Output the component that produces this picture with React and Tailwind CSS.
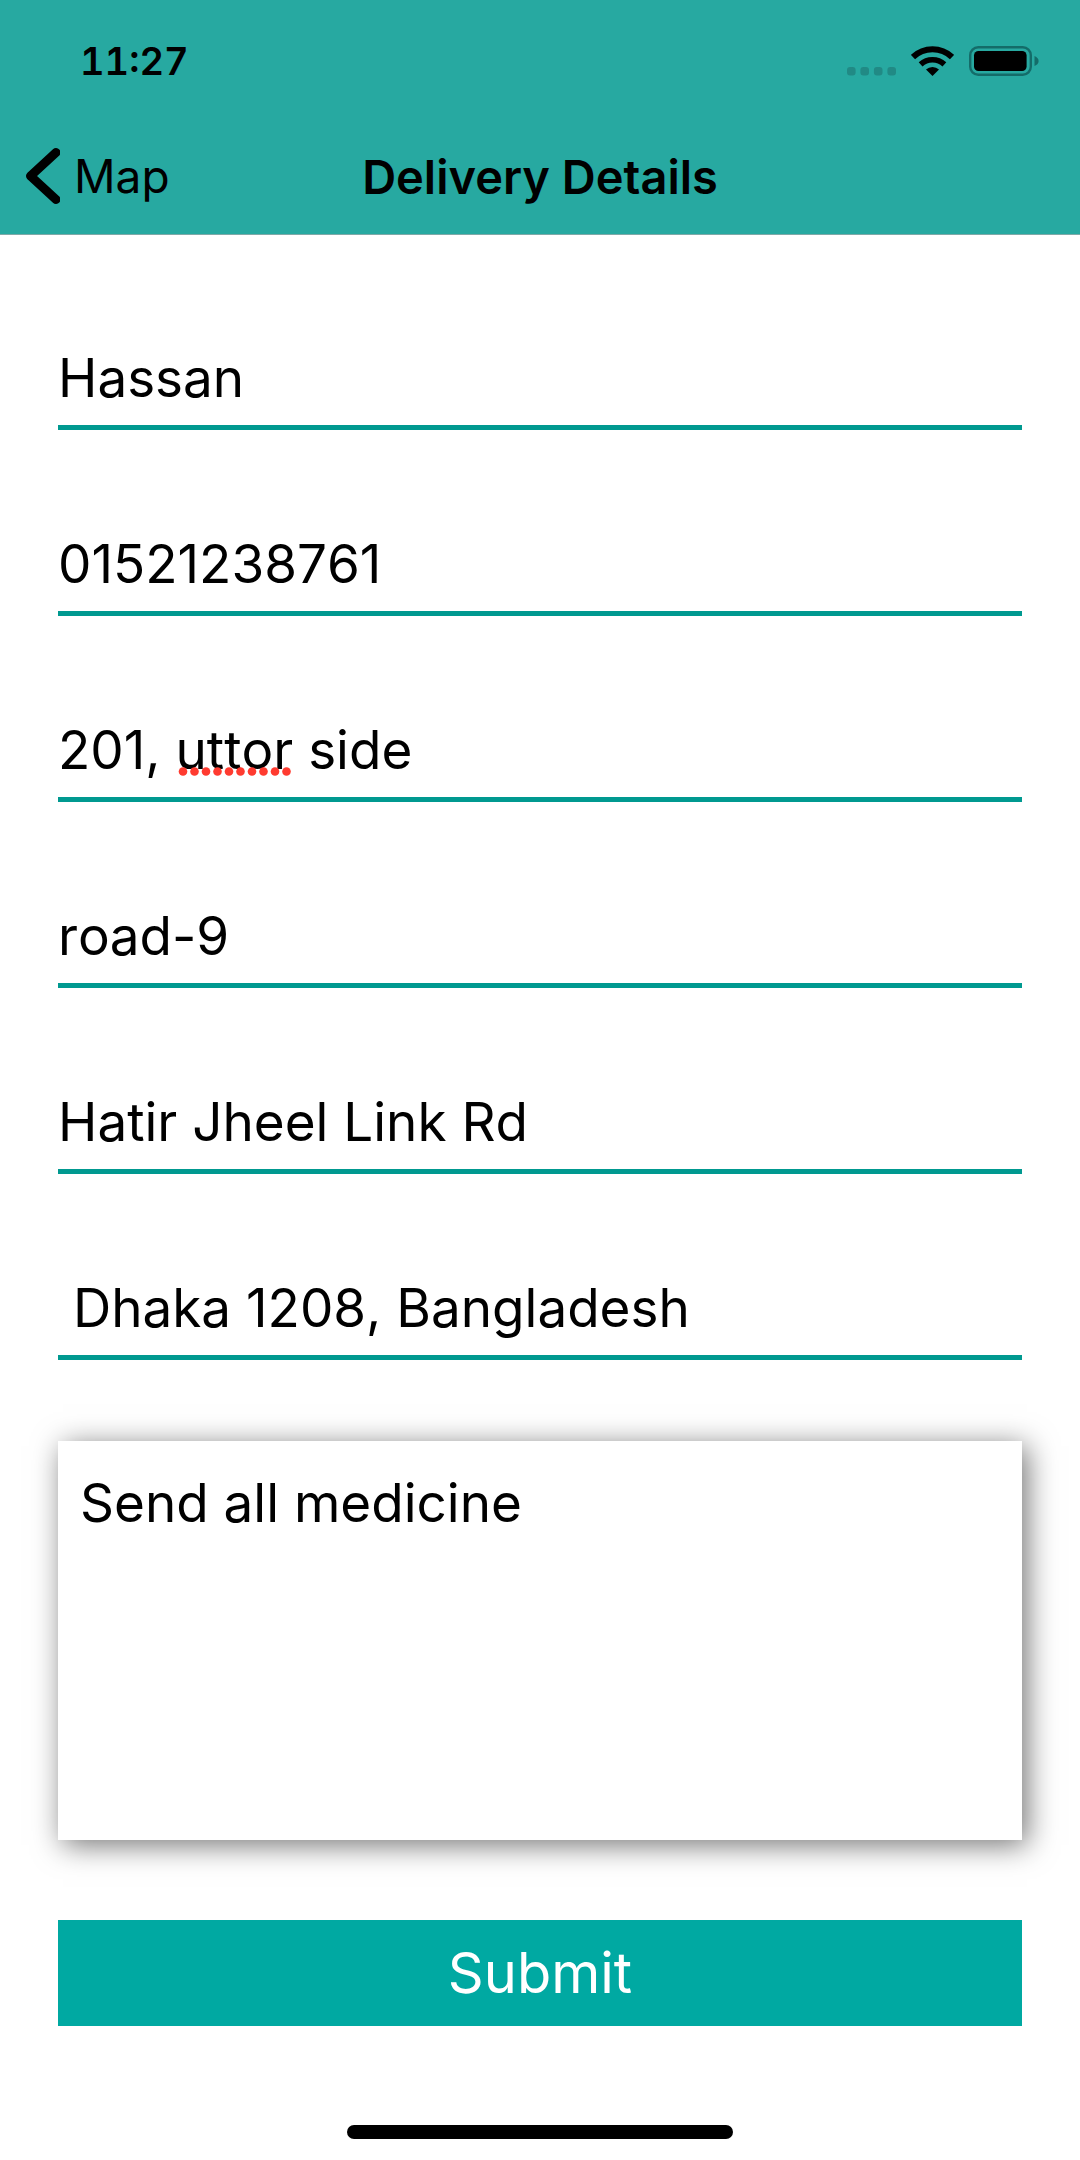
import React, { useState } from 'react';

const fields = [
  { name: 'name', label: 'Name', value: 'Hassan' },
  { name: 'phone', label: 'Phone', value: '01521238761', type: 'tel' },
  { name: 'house', label: 'House', value: '201, uttor side', misspelled: true },
  { name: 'road', label: 'Road', value: 'road-9' },
  { name: 'area', label: 'Area', value: 'Hatir Jheel Link Rd' },
  { name: 'city', label: 'City', value: ' Dhaka 1208, Bangladesh' },
];

function StatusBar() {
  return (
    <div className="flex h-[122px] items-center justify-between pl-20 pr-10">
      <span className="text-[38px] font-semibold leading-none tabular-nums">11:27</span>
      <div className="flex items-center gap-[15px]">
        <svg className="h-[30px] w-[49px]" viewBox="0 0 49 30" fill="#218a85">
          <rect x="0" y="21" width="8.6" height="8.6" rx="3" />
          <rect x="13.4" y="21" width="8.6" height="8.6" rx="3" />
          <rect x="26.9" y="21" width="8.6" height="8.6" rx="3" />
          <rect x="40.4" y="21" width="8.6" height="8.6" rx="3" />
        </svg>
        <svg className="h-[30px] w-[43px]" viewBox="0 0 43 30" fill="none">
          <path d="M2 11 A28.3 28.3 0 0 1 41 11" stroke="#000" strokeWidth="6" />
          <path d="M9.6 18.4 A17.6 17.6 0 0 1 33.4 18.4" stroke="#000" strokeWidth="5.6" />
          <path d="M21.5 30 L15 23.6 A9.4 9.4 0 0 1 28 23.6 Z" fill="#000" />
        </svg>
        <svg className="h-[30px] w-[71px]" viewBox="0 0 71 30">
          <rect x="1.2" y="1.2" width="60.6" height="27.6" rx="8" fill="none" stroke="#146c69" strokeWidth="2.4" />
          <rect x="5" y="5" width="52.6" height="20" rx="4.5" fill="#000" />
          <path d="M65.5 10 C68.3 11 69.6 13 69.6 15 C69.6 17 68.3 19 65.5 20 Z" fill="#146c69" />
        </svg>
      </div>
    </div>
  );
}

function NavBar() {
  return (
    <nav className="grid h-28 grid-cols-[1fr_auto_1fr] items-center px-6 pb-3 pt-2">
      <button type="button" className="flex items-center gap-[14px] justify-self-start text-[46px] leading-none">
        <svg className="h-[58px] w-9" viewBox="0 0 36 58" fill="none" stroke="#000" strokeWidth="9" strokeLinecap="round" strokeLinejoin="round">
          <path d="M32 5.5 L6.5 29 L32 52.5" />
        </svg>
        Map
      </button>
      <h1 className="text-[47px] font-semibold leading-none">Delivery Details</h1>
    </nav>
  );
}

// Spell checker dots that sit under a word inside the input
function SpellDots() {
  return (
    <svg className="pointer-events-none absolute bottom-[26px] left-[120px] h-[9px] w-[114px]" viewBox="0 0 114 9" fill="#ff3b30">
      {[...Array(10)].map((_, i) => (
        <circle key={i} cx={5 + i * 11.5} cy="4.5" r="4.3" />
      ))}
    </svg>
  );
}

export default function App() {
  const [form, setForm] = useState({
    ...Object.fromEntries(fields.map((f) => [f.name, f.value])),
    note: 'Send all medicine',
  });

  const handleChange = (e) => {
    setForm({ ...form, [e.target.name]: e.target.value });
  };

  return (
    <div className="flex min-h-screen flex-col bg-white font-['Inter',sans-serif] text-black">
      <header className="border-b border-[#7fa9a8] bg-[#27a9a1]">
        <StatusBar />
        <NavBar />
      </header>

      <form className="flex flex-col px-[58px] pt-[75px]" onSubmit={(e) => e.preventDefault()}>
        <div className="flex flex-col gap-[66px]">
          {fields.map((f) => (
            <div key={f.name} className="relative">
              <input
                type={f.type || 'text'}
                name={f.name}
                aria-label={f.label}
                value={form[f.name]}
                onChange={handleChange}
                spellCheck={false}
                className="block h-[120px] w-full border-b-[5px] border-[#009990] bg-transparent pt-5 text-[53px] outline-none [font-kerning:none]"
              />
              {f.misspelled && form[f.name] === f.value && <SpellDots />}
            </div>
          ))}
        </div>

        <textarea
          name="note"
          aria-label="Note"
          value={form.note}
          onChange={handleChange}
          spellCheck={false}
          className="mt-[81px] block h-[399px] w-full resize-none bg-white px-[22px] py-8 text-[53px] leading-[60px] shadow-[5px_5px_28px_rgba(0,0,0,0.55)] outline-none"
        />

        <button type="submit" className="mt-20 h-[106px] w-full bg-[#00a9a2] text-[56px] leading-none text-white">
          Submit
        </button>
      </form>

      {/* Home indicator */}
      <div className="mt-auto flex justify-center pb-[21px] pt-10">
        <div className="h-[14px] w-[386px] rounded-full bg-black" />
      </div>
    </div>
  );
}
